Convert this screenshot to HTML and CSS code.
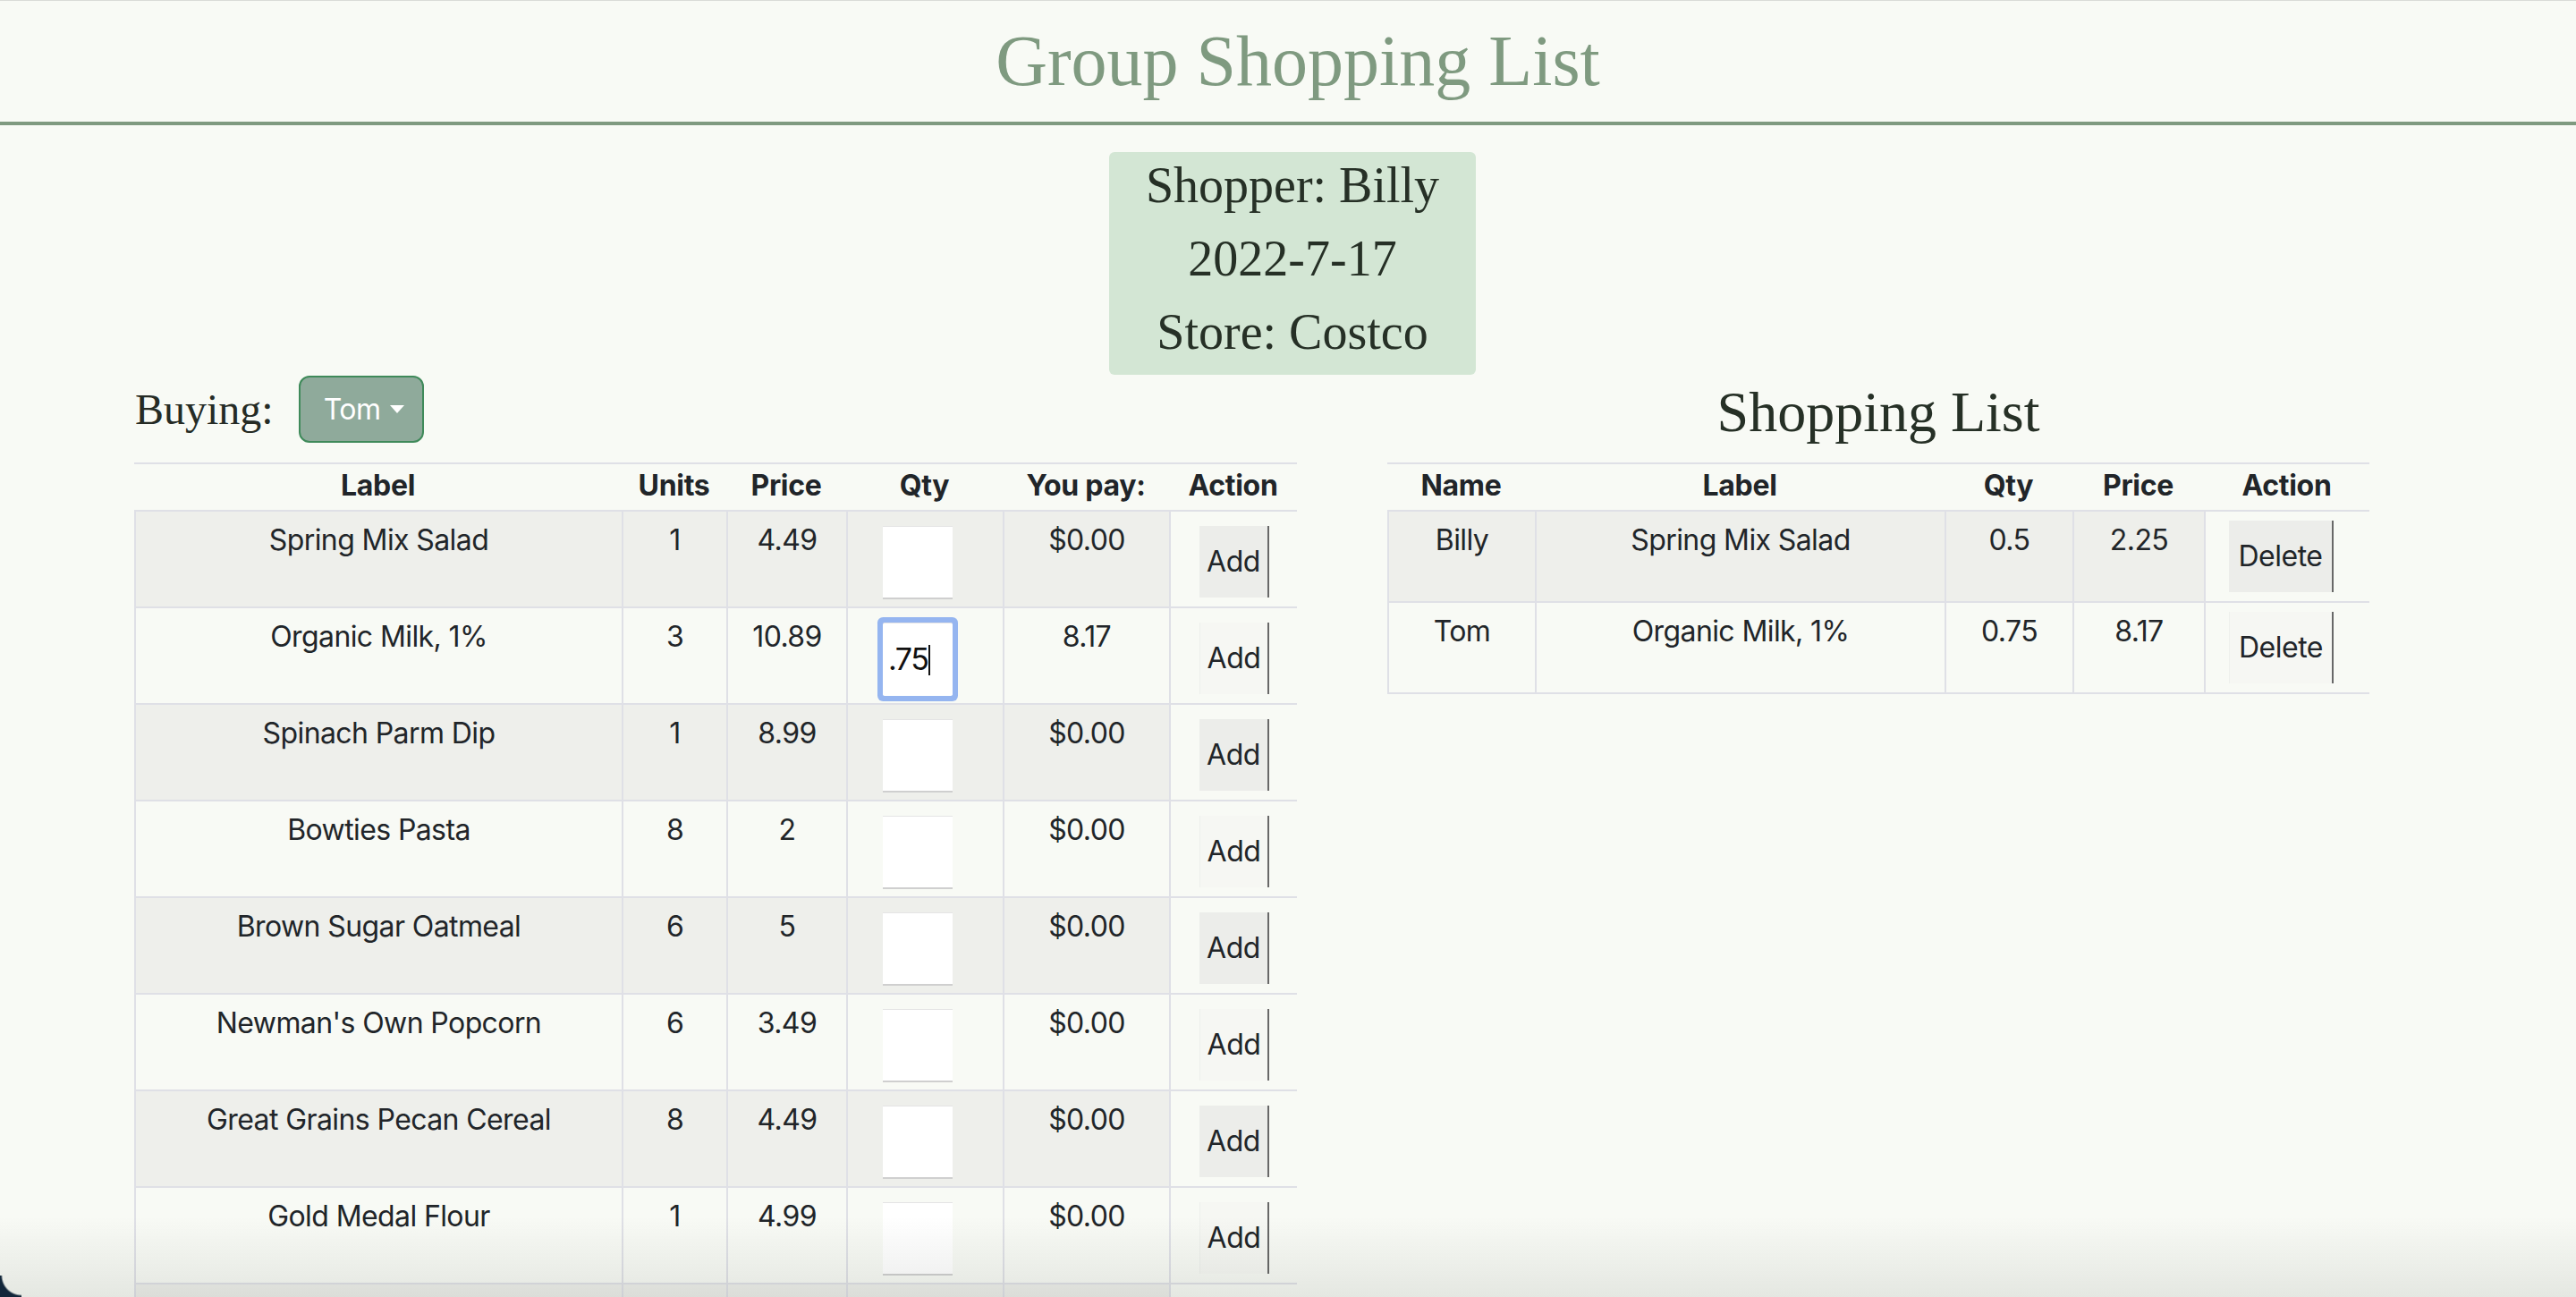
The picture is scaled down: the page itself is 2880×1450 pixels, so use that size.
FILE: index.html
```html
<!DOCTYPE html>
<html lang="en">
<head>
<meta charset="utf-8">
<title>Group Shopping List</title>
<link rel="stylesheet" href="styles.css">
</head>
<body>
<header class="site-header">
  <h1 class="site-title">Group Shopping List</h1>
</header>

<section class="shopper">
  <div class="shopper-line">Shopper: Billy</div>
  <div class="shopper-line">2022-7-17</div>
  <div class="shopper-line">Store: Costco</div>
</section>

<main class="main">
  <div class="col-left">
    <div class="buying">
      <span class="buying-label">Buying:</span>
      <button class="dropdown-btn" type="button">Tom<span class="caret"></span></button>
    </div>
    <table class="tbl tbl-items">
      <colgroup>
        <col style="width:545px"><col style="width:117px"><col style="width:134px"><col style="width:175px"><col style="width:186px"><col style="width:143px">
      </colgroup>
      <thead>
        <tr><th>Label</th><th>Units</th><th>Price</th><th>Qty</th><th>You pay:</th><th>Action</th></tr>
      </thead>
      <tbody>
        <tr><td>Spring Mix Salad</td><td>1</td><td>4.49</td><td class="qty"><input class="qty-input" type="text"></td><td>$0.00</td><td class="act"><button class="row-btn" type="button">Add</button></td></tr>
        <tr><td>Organic Milk, 1%</td><td>3</td><td>10.89</td><td class="qty"><span class="qty-wrap focused"><input class="qty-input" type="text" value=".75"></span></td><td>8.17</td><td class="act"><button class="row-btn" type="button">Add</button></td></tr>
        <tr><td>Spinach Parm Dip</td><td>1</td><td>8.99</td><td class="qty"><input class="qty-input" type="text"></td><td>$0.00</td><td class="act"><button class="row-btn" type="button">Add</button></td></tr>
        <tr><td>Bowties Pasta</td><td>8</td><td>2</td><td class="qty"><input class="qty-input" type="text"></td><td>$0.00</td><td class="act"><button class="row-btn" type="button">Add</button></td></tr>
        <tr><td>Brown Sugar Oatmeal</td><td>6</td><td>5</td><td class="qty"><input class="qty-input" type="text"></td><td>$0.00</td><td class="act"><button class="row-btn" type="button">Add</button></td></tr>
        <tr><td>Newman's Own Popcorn</td><td>6</td><td>3.49</td><td class="qty"><input class="qty-input" type="text"></td><td>$0.00</td><td class="act"><button class="row-btn" type="button">Add</button></td></tr>
        <tr><td>Great Grains Pecan Cereal</td><td>8</td><td>4.49</td><td class="qty"><input class="qty-input" type="text"></td><td>$0.00</td><td class="act"><button class="row-btn" type="button">Add</button></td></tr>
        <tr><td>Gold Medal Flour</td><td>1</td><td>4.99</td><td class="qty"><input class="qty-input" type="text"></td><td>$0.00</td><td class="act"><button class="row-btn" type="button">Add</button></td></tr>
        <tr class="row-tail"><td></td><td></td><td></td><td></td><td></td><td class="act"></td></tr>
      </tbody>
    </table>
  </div>

  <div class="col-right">
    <h2 class="list-title">Shopping List</h2>
    <table class="tbl tbl-list">
      <colgroup>
        <col style="width:165px"><col style="width:458px"><col style="width:143px"><col style="width:147px"><col style="width:185px">
      </colgroup>
      <thead>
        <tr><th>Name</th><th>Label</th><th>Qty</th><th>Price</th><th>Action</th></tr>
      </thead>
      <tbody>
        <tr><td>Billy</td><td>Spring Mix Salad</td><td>0.5</td><td>2.25</td><td class="act"><button class="row-btn del-btn" type="button">Delete</button></td></tr>
        <tr><td>Tom</td><td>Organic Milk, 1%</td><td>0.75</td><td>8.17</td><td class="act"><button class="row-btn del-btn" type="button">Delete</button></td></tr>
      </tbody>
    </table>
  </div>
</main>

<div class="shade"></div>
<div class="corner"></div>
</body>
</html>
```

FILE: styles.css
```css
* { box-sizing: border-box; }

html, body {
  margin: 0;
  height: 100%;
  overflow: hidden;
}

body {
  background: #f8faf5;
  color: #212529;
  font-family: Inter, "Noto Sans", sans-serif;
  font-size: 32px;
  border-top: 1px solid #d9dbd7;
}

.site-header {
  border-bottom: 4px solid #7f9a80;
  padding: 27px 0 28px 22px;
  text-align: center;
}

.site-title {
  margin: 0;
  font-family: "Liberation Serif", "Times New Roman", serif;
  font-weight: 400;
  font-size: 80px;
  line-height: 80px;
  color: #7f9a80;
}

.shopper {
  width: 410px;
  margin: 30px 0 0 calc(50% - 200px);
  background: #d3e6d4;
  border-radius: 6px;
  padding: 4px 0 14px;
  display: flex;
  flex-direction: column;
  gap: 15px;
  text-align: center;
  font-family: "Liberation Serif", "Times New Roman", serif;
  font-size: 56px;
  line-height: 67px;
  color: #263026;
}

.main {
  display: flex;
  align-items: flex-start;
  gap: 101px;
  padding-left: 150px;
}

.col-left { width: 1300px; flex: none; }
.col-right { width: 1098px; flex: none; }

.buying {
  display: flex;
  align-items: flex-start;
  gap: 28px;
  margin-top: 1px;
  margin-bottom: 22px;
  height: 75px;
}

.buying-label {
  margin-left: 1px;
  font-family: "Liberation Serif", "Times New Roman", serif;
  font-size: 48px;
  line-height: 75px;
  color: #252b25;
}

.dropdown-btn {
  display: flex;
  align-items: flex-start;
  width: 140px;
  height: 75px;
  padding: 16px 0 0 26px;
  background: #8faa9b;
  border: 2px solid #3f8a5a;
  border-radius: 12px;
  color: #ffffff;
  font-family: Inter, "Noto Sans", sans-serif;
  font-size: 32px;
  line-height: 40px;
  letter-spacing: -0.5px;
}

.caret {
  width: 0;
  height: 0;
  margin: 15px 0 0 10px;
  border-top: 9px solid #ffffff;
  border-left: 8.5px solid transparent;
  border-right: 8.5px solid transparent;
}

.list-title {
  margin: 0 0 15px;
  font-family: "Liberation Serif", "Times New Roman", serif;
  font-weight: 400;
  font-size: 64px;
  line-height: 83px;
  text-align: center;
  color: #263026;
}

.tbl {
  width: 100%;
  table-layout: fixed;
  border-collapse: separate;
  border-spacing: 0;
  border-top: 2px solid #dfe0e6;
}

.tbl th {
  padding: 4px 0 7px;
  font-weight: 700;
  line-height: 40px;
  letter-spacing: -0.3px;
  text-align: center;
  border-bottom: 2px solid #dfe0e6;
  white-space: nowrap;
}

.tbl td {
  padding: 12px 4px 0;
  line-height: 40px;
  letter-spacing: -0.6px;
  vertical-align: top;
  text-align: center;
  border-left: 2px solid #dfe0e6;
  border-bottom: 2px solid #dfe0e6;
  white-space: nowrap;
}

.tbl tbody tr:nth-child(odd) td:not(.act) { background: #eeefeb; }

.tbl .row-tail td { height: 108px; }

.tbl td.qty {
  padding: 16px 0 8px 39px;
  text-align: left;
}

.tbl-items td.act {
  padding: 16px 0 0 32px;
  text-align: left;
}

.tbl-list td.act {
  padding: 10px 0 10px 26px;
  text-align: left;
}

.qty-input {
  display: block;
  width: 78px;
  height: 82px;
  margin: 0;
  padding: 0 6px;
  background: #ffffff;
  border: 0;
  border-top: 1px solid #e4e4e4;
  border-bottom: 2px solid #cfcfcf;
  border-radius: 0;
  font-family: Inter, "Noto Sans", sans-serif;
  font-size: 34px;
  letter-spacing: -1.5px;
  color: #111;
  outline: none;
}

.qty-wrap {
  position: relative;
  display: block;
  width: 78px;
}

.qty-wrap.focused .qty-input {
  border-radius: 2px;
  border-bottom-color: #ffffff;
  box-shadow: 0 0 0 6px #95b5f0;
}

.qty-wrap.focused::after {
  content: "";
  position: absolute;
  left: 51px;
  top: 25px;
  width: 2px;
  height: 34px;
  background: #111;
}

.row-btn {
  display: block;
  width: 78px;
  height: 80px;
  padding: 0;
  margin: 0;
  background: #ecedea;
  border: 0;
  border-right: 2px solid #686868;
  border-radius: 0;
  color: #212529;
  font-family: Inter, "Noto Sans", sans-serif;
  font-size: 32px;
  line-height: 40px;
  letter-spacing: -0.5px;
  text-align: center;
}

.del-btn { width: 117px; }

.tbl tbody tr:nth-child(even) .row-btn {
  background: #f6f7f3;
  border-left: 1px solid #eef0ec;
}

.shade {
  position: fixed;
  left: 0;
  right: 0;
  bottom: 0;
  height: 90px;
  background: linear-gradient(rgba(40, 50, 40, 0), rgba(40, 50, 40, 0.09));
  pointer-events: none;
}

.corner {
  position: fixed;
  left: 0;
  bottom: 0;
  width: 24px;
  height: 24px;
  background: radial-gradient(circle at 100% 0, transparent 21px, #12263a 23px);
  pointer-events: none;
}
```
